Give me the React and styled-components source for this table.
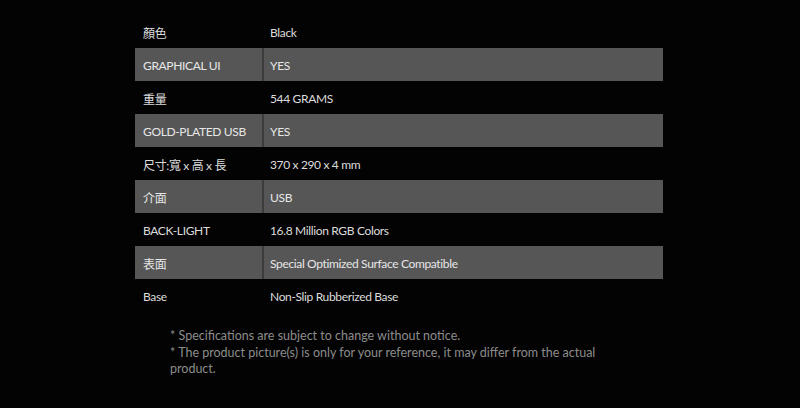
import React from "react";
import styled, { createGlobalStyle } from "styled-components";

const Global = createGlobalStyle`
  html, body { margin: 0; padding: 0; background: #030303; }
  body { width: 800px; height: 408px; overflow: hidden; }
`;

const Page = styled.div`
  width: 800px;
  height: 408px;
  background: #030303;
  padding: 15px 0 0 135px;
  box-sizing: border-box;
  font-family: Lato, "Noto Sans CJK TC", sans-serif;
`;

const Table = styled.div`
  width: 528px;
  display: flex;
  flex-direction: column;
`;

const Row = styled.div`
  display: grid;
  grid-template-columns: 127px 1fr;
  height: 33px;
  background: ${(p) => (p.$shaded ? "#565656" : "transparent")};
  color: ${(p) => (p.$shaded ? "#e6e6e6" : "#dcdcdc")};
`;

const Cell = styled.div`
  display: flex;
  align-items: center;
  padding: 2px 0 0 ${(p) => (p.$value ? "6px" : "8px")};
  font-size: 12px;
  letter-spacing: -0.35px;
  border-left: ${(p) =>
    p.$value ? (p.$shaded ? "2px solid #3c3c3c" : "2px solid transparent") : "none"};
  box-sizing: border-box;
  white-space: nowrap;
`;

const Notes = styled.div`
  width: 440px;
  margin: 16px 0 0 35px;
  color: #8c8c8c;
  font-size: 12.5px;
  line-height: 16.5px;
`;

const rows = [
  ["顏色", "Black"],
  ["GRAPHICAL UI", "YES"],
  ["重量", "544 GRAMS"],
  ["GOLD-PLATED USB", "YES"],
  ["尺寸:寬 x 高 x 長", "370 x 290 x 4 mm"],
  ["介面", "USB"],
  ["BACK-LIGHT", "16.8 Million RGB Colors"],
  ["表面", "Special Optimized Surface Compatible"],
  ["Base", "Non-Slip Rubberized Base"],
];

export default function App() {
  return (
    <Page>
      <Global />
      <Table>
        {rows.map(([k, v], i) => {
          const shaded = i % 2 === 1;
          return (
            <Row key={k} $shaded={shaded}>
              <Cell $shaded={shaded}>{k}</Cell>
              <Cell $value $shaded={shaded}>{v}</Cell>
            </Row>
          );
        })}
      </Table>
      <Notes>
        <div>* Specifications are subject to change without notice.</div>
        <div>* The product picture(s) is only for your reference, it may differ from the actual product.</div>
      </Notes>
    </Page>
  );
}
